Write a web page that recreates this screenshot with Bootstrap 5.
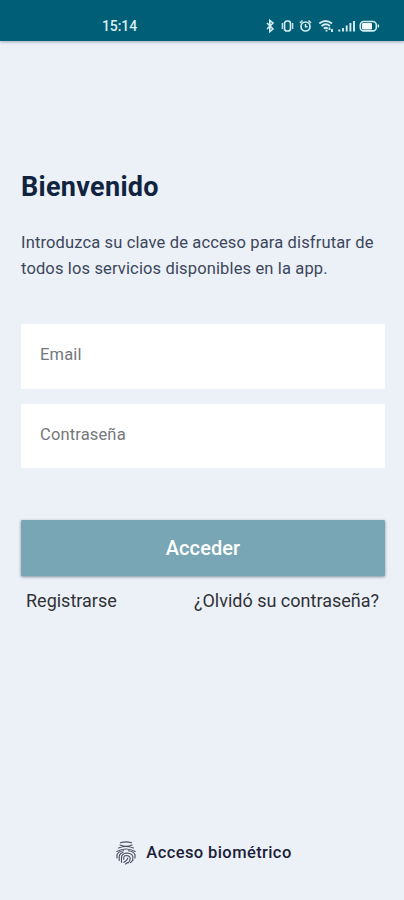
<!DOCTYPE html>
<html lang="es">
<head>
<meta charset="utf-8">
<meta name="viewport" content="width=device-width, initial-scale=1">
<title>Bienvenido</title>
<link href="https://cdn.jsdelivr.net/npm/bootstrap@5.3.0/dist/css/bootstrap.min.css" rel="stylesheet">
<style>
body{font-family:Roboto,"Liberation Sans",sans-serif;background:#ecf0f7;color:#27364a}
.screen{height:900px;overflow:hidden}
.status{height:41px;background:#005e76;box-shadow:0 1px 3px rgba(0,40,60,.35);padding:12px 24px 0 102px;color:#d9eef2}
.clock{font-size:14px;line-height:29px;font-weight:500;height:29px;letter-spacing:-.1px}
.icons{width:116px;height:16px;margin-top:6px}
.main-area{padding:127px 19px 0 21px}
.title{font-size:27px;line-height:38px;font-weight:700;color:#10233f;letter-spacing:.3px;margin:0}
.intro{font-size:16.5px;line-height:26px;letter-spacing:.14px;margin:24px 0 42px;white-space:nowrap;color:#3b475a}
.field{height:65px;border:0;border-radius:1px;padding:0 19px 4px;font-size:16.5px;letter-spacing:.15px;background:#fff}
.field::placeholder{color:#74777c;opacity:1}
.field + .field{margin-top:15px;height:64px;padding-bottom:3px}
.enter{height:56px;margin-top:52px;border:0;border-radius:1px;background:#78a6b4;color:#fff;font-size:20px;font-weight:500;letter-spacing:.1px;box-shadow:0 1px 3px rgba(20,50,65,.5);padding:0}
.links{padding:11px 6px 0 5px;font-size:18px;line-height:28px}
.links a{color:#303237}
.bio{padding:0 0 33px 4px;color:#1b2037;font-size:16.5px;line-height:28px;font-weight:500;letter-spacing:.4px;gap:10px}
</style>
</head>
<body>
<div class="screen d-flex flex-column">
  <header class="status d-flex justify-content-between flex-shrink-0">
    <span class="clock">15:14</span>
    <svg class="icons" viewBox="0 0 116 16" fill="none" stroke="#d3edf2" stroke-width="1.500" aria-hidden="true">
      <path d="M3 5l6 6-3.200 2.600V2.400L9 5l-6 6" stroke-width="1.600"/>
      <rect x="20.500" y="3" width="6" height="10" rx="2.500" stroke-width="1.700"/>
      <path d="M18.300 5v6M28.700 5v6" stroke-width="1.200"/>
      <circle cx="41.500" cy="8.500" r="4.500" stroke-width="1.700"/><path d="M41.500 6v2.800h2M36 5l2.500-2.500M47 5l-2.500-2.500" stroke-width="1.500"/>
      <path d="M55.300 5.500q6.200-5 12.700 0M57.500 8q4.300-3.500 8.500 0M59.800 10.500q2-1.600 4 0" stroke-width="1.900"/>
      <path d="M62.500 13.500v-1.800M65.500 9.500v2.500M68 11v3" stroke-width="1.900"/>
      <path d="M75.300 13.500v-2M79 13.500v-3.500M82.700 13.500V7.500M86.400 13.500V5M90 13.500V3" stroke-width="1.900"/>
      <rect x="96.300" y="3.500" width="16" height="9.400" rx="3.500" stroke-width="1.600"/>
      <rect x="98" y="5" width="10" height="6.400" rx="1" fill="#f5fbfc" stroke="none"/>
      <path d="M114.400 6.500v3" stroke-width="1.400"/>
    </svg>
  </header>
  <main class="main-area flex-grow-1">
    <h1 class="title">Bienvenido</h1>
    <p class="intro">Introduzca su clave de acceso para disfrutar de<br>todos los servicios disponibles en la app.</p>
    <form>
      <input class="form-control field" type="email" placeholder="Email" aria-label="Email">
      <input class="form-control field" type="password" placeholder="Contraseña" aria-label="Contraseña">
      <button class="btn enter w-100" type="button">Acceder</button>
    </form>
    <div class="links d-flex justify-content-between">
      <a href="#" class="text-decoration-none">Registrarse</a>
      <a href="#" class="text-decoration-none">¿Olvidó su contraseña?</a>
    </div>
  </main>
  <footer class="bio d-flex justify-content-center align-items-center">
    <svg width="20" height="24" viewBox="0 0 20 24" fill="none" stroke="#4a5063" stroke-width="1.150" stroke-linecap="round" aria-hidden="true">
      <path d="M4.500 1.800q5.500-2 11 0M4 4q6 2.800 12 0M2.500 7q7.500-3 15 0"/>
      <path d="M.8 10.500Q10 5.500 19.200 10.500M1 17v-3.500Q3 10 7.500 9.700M19 17v-3.500Q17 10 12.500 9.700"/>
      <path d="M3.200 19.500v-4.300Q4 12 7 11.500M5.500 21.300v-5Q6 13 10 12q6 .2 6.800 3.400v4"/>
      <path d="M7.800 18.300v-2q.2-1.800 2.400-1.800 4 .2 4 3.200-.2 2-2 4.300M7.800 21.300q3.700-1.800 4-4.300M9.500 23l2-1.500M14.500 21.700l2-2"/>
    </svg>
    <span>Acceso biométrico</span>
  </footer>
</div>
<script src="https://cdn.jsdelivr.net/npm/bootstrap@5.3.0/dist/js/bootstrap.bundle.min.js"></script>
</body>
</html>
